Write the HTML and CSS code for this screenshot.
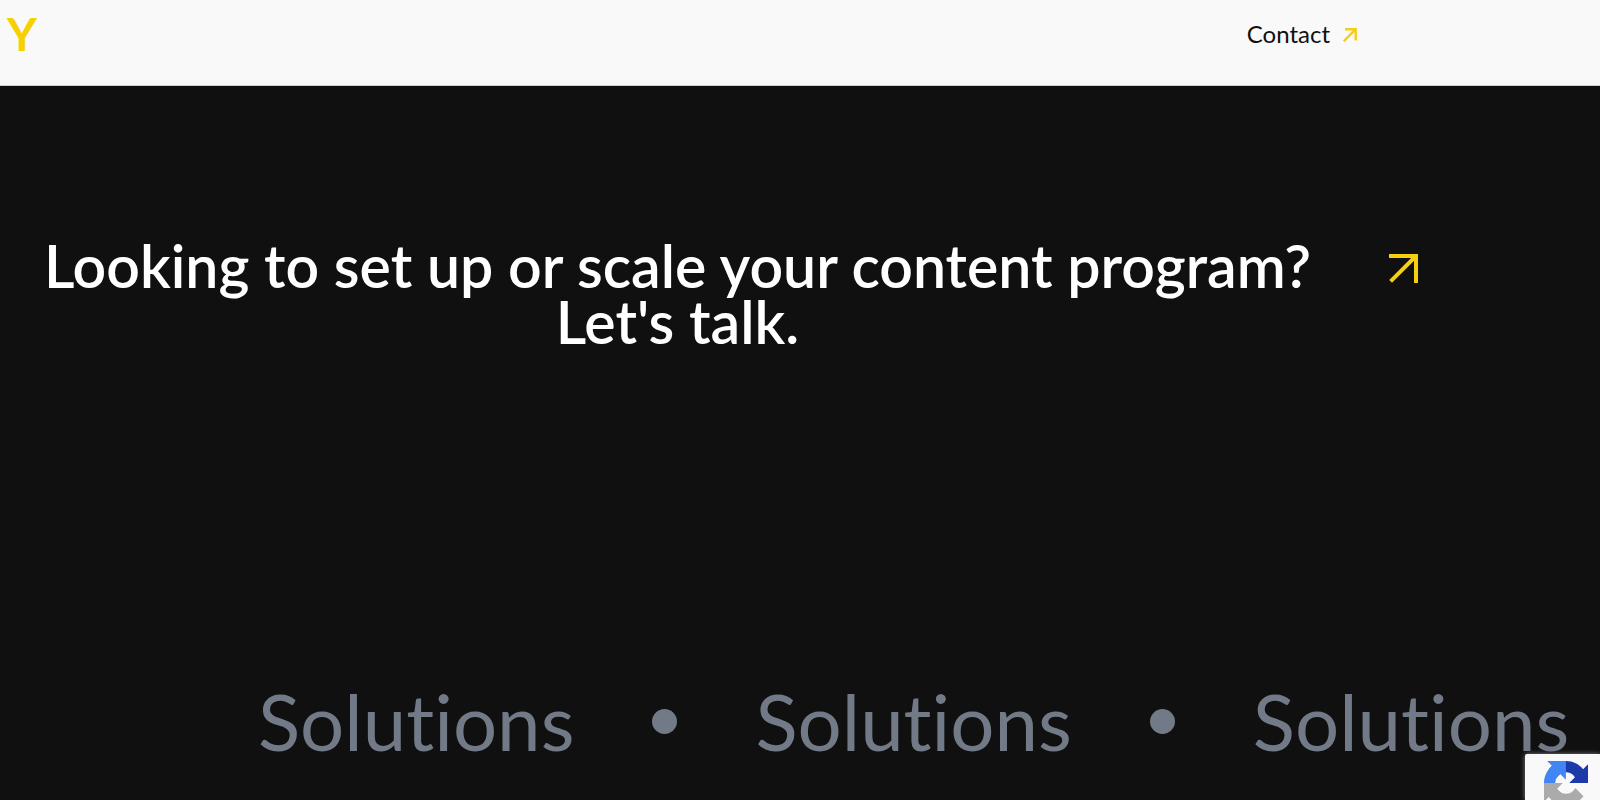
FILE: index.html
```html
<!DOCTYPE html>
<html lang="en">
<head>
    <meta charset="UTF-8">
    <meta name="viewport" content="width=device-width, initial-scale=1.0">
    <title>Contact</title>
    <link rel="stylesheet" href="styles.css">
</head>
<body>
    <header class="header">
        <a class="logo" href="#">Y</a>
        <a class="contact" href="#contact">
            Contact
            <svg class="contact-arrow" viewBox="0 0 14 14" aria-hidden="true">
                <path d="M2 1.3H12.7V12.6M12.3 1.7L0.8 13.2"/>
            </svg>
        </a>
    </header>

    <main class="main">
        <a class="talk" href="#contact">
            <h1 class="talk-title">Looking to set up or scale your content program? Let's talk.</h1>
            <svg class="talk-arrow" viewBox="0 0 30 30" aria-hidden="true">
                <path d="M0 2H27V29M26.5 2.5L1.6 27.4"/>
            </svg>
        </a>

        <div class="marquee">
            <span>Solutions</span>
            <span class="dot"></span>
            <span>Solutions</span>
            <span class="dot"></span>
            <span>Solutions</span>
        </div>
    </main>

    <div class="badge">
        <svg class="badge-logo" viewBox="0 0 64 64" aria-hidden="true">
            <path fill="#1c3aa9" d="M64 31.955l-.033-1.37V4.687l-7.16 7.16C50.948 4.674 42.033.093 32.05.093c-10.4 0-19.622 4.96-25.458 12.64l11.736 11.86a15.55 15.55 0 0 1 4.754-5.334c2.05-1.6 4.952-2.906 8.968-2.906.485 0 .86.057 1.135.163 4.976.393 9.288 3.14 11.828 7.124l-8.307 8.307L64 31.955"/>
            <path fill="#4285f4" d="M31.862.094l-1.37.033H4.594l7.16 7.16C4.58 13.147 0 22.06 0 32.046c0 10.4 4.96 19.622 12.64 25.458L24.5 45.768a15.55 15.55 0 0 1-5.334-4.754c-1.6-2.05-2.906-4.952-2.906-8.968 0-.485.057-.86.163-1.135.393-4.976 3.14-9.288 7.124-11.828l8.307 8.307L31.862.094"/>
            <path fill="#ababab" d="M.001 32.045l.033 1.37v25.898l7.16-7.16c5.86 7.173 14.774 11.754 24.76 11.754 10.4 0 19.622-4.96 25.458-12.64l-11.736-11.86a15.55 15.55 0 0 1-4.754 5.334c-2.05 1.6-4.952 2.906-8.968 2.906-.485 0-.86-.057-1.135-.163-4.976-.393-9.288-3.14-11.828-7.124l8.307-8.307L.001 32.045"/>
        </svg>
    </div>
</body>
</html>
```
FILE: styles.css
```css
* {
    box-sizing: border-box;
}

body {
    display: flex;
    flex-direction: column;
    height: 100vh;
    margin: 0;
    overflow: hidden;
    font-family: Lato, "Open Sans", sans-serif;
    font-variant-ligatures: none;
    background-color: #101010;
}

a {
    color: inherit;
    text-decoration: none;
}

.header {
    display: flex;
    align-items: flex-start;
    justify-content: space-between;
    height: 86px;
    padding: 6px 243px 0 7px;
    background-color: #f9f9f9;
    border-bottom: 1px solid #ccd2d2;
}

.logo {
    color: #f6d000;
    font-size: 46px;
    font-weight: 700;
    line-height: 56px;
}

.contact {
    display: flex;
    align-items: center;
    gap: 13px;
    color: #101010;
    font-size: 24px;
    line-height: 56px;
}

.contact-arrow {
    width: 14px;
    height: 14px;
    margin-top: 2px;
    fill: none;
    stroke: #f6cf10;
    stroke-width: 2.4;
}

.main {
    display: flex;
    flex: 1;
    flex-direction: column;
    justify-content: space-between;
}

.talk {
    display: flex;
    align-items: flex-start;
    gap: 34px;
    padding: 152px 181px 0 0;
}

.talk-title {
    flex: 1;
    margin: 0;
    color: #fff;
    font-size: 59px;
    font-weight: 600;
    line-height: 56px;
    text-align: center;
}

.talk-arrow {
    width: 30px;
    height: 30px;
    margin-top: 16px;
    fill: none;
    stroke: #f6cf10;
    stroke-width: 4;
}

.marquee {
    display: flex;
    align-items: center;
    gap: 78px;
    padding: 0 0 32px 258px;
    color: #727a87;
    font-size: 78px;
    line-height: 94px;
    white-space: nowrap;
}

.dot {
    flex: none;
    width: 25px;
    height: 25px;
    background-color: #727a87;
    border-radius: 50%;
}

.badge {
    position: fixed;
    right: 0;
    bottom: 0;
    width: 75px;
    height: 46px;
    padding: 7px 0 0 19px;
    overflow: hidden;
    background-color: #f9f9f9;
    border-radius: 2px 0 0 0;
    box-shadow: 0 0 5px gray;
}

.badge-logo {
    width: 44px;
    height: 44px;
}
```
